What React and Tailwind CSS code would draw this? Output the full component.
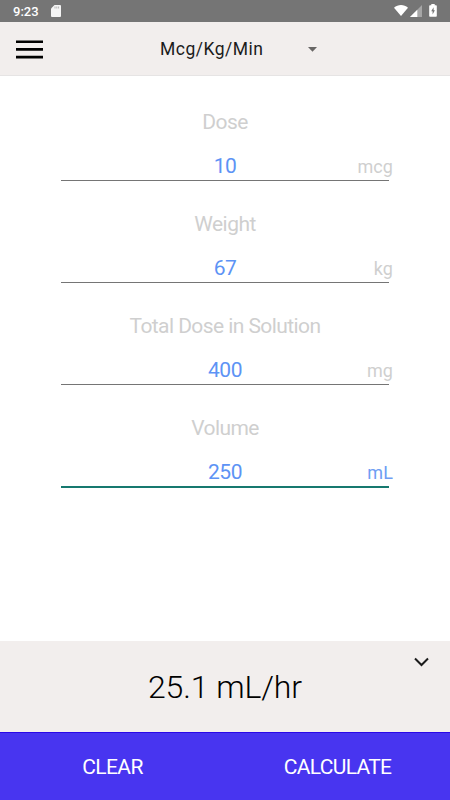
const fields = [
    { label: "Dose", value: "10", unit: "mcg" },
    { label: "Weight", value: "67", unit: "kg" },
    { label: "Total Dose in Solution", value: "400", unit: "mg" },
    { label: "Volume", value: "250", unit: "mL", active: true },
];

function StatusBar(){
    return (
        <div className="flex h-[22px] items-center bg-[#757575] pl-[13px] pr-[13px] text-white">
            <span className="pt-px text-[13px] font-medium leading-[22px]">9:23</span>
            <svg className="ml-3 h-3 w-[10px]" viewBox="0 0 10 12" fill="#f4f4f4">
                <path d="M3.5 0H9a1 1 0 0 1 1 1v10a1 1 0 0 1-1 1H1a1 1 0 0 1-1-1V3.5Z" />
                <path d="M3.5 1.5h1v2h-1zM5.3 1.5h1v2h-1zM7.1 1.5h1v2h-1z" fill="#b5b5b5" />
            </svg>
            <svg className="-mt-px ml-auto h-[11px] w-[14px]" viewBox="0 0 14 11" fill="currentColor">
                <path d="M0 2.7C4-.9 10-.9 14 2.7L7 11Z" />
            </svg>
            <svg className="ml-[2px] h-[12px] w-[12px]" viewBox="0 0 12 12">
                <path d="M12 0v12H0Z" fill="#a6a6a6" />
                <path d="M7.3 4.7V12H0Z" fill="#fff" />
            </svg>
            <svg className="-mt-[2px] ml-[7px] h-[13px] w-[8px]" viewBox="0 0 8 13">
                <path d="M2.3 0h3.4v1.2H7a.8.8 0 0 1 .8.8v10a.8.8 0 0 1-.8.8H1a.8.8 0 0 1-.8-.8V2a.8.8 0 0 1 .8-.8h1.3Z" fill="#fff" />
                <path d="M4.6 3.3 2.2 7.3h1.4v3.2l2.3-4.2H4.6Z" fill="#757575" />
            </svg>
        </div>
    );
}

function Header(){
    return (
        <div className="flex h-[54px] items-center border-b border-[#e6e4e4] bg-[#f2eeed] pl-4">
            <button className="mt-[2px]">
                <svg className="block h-[19px] w-[27px]" viewBox="0 0 27 19" fill="#000">
                    <path d="M0 .4h27v2.7H0zM0 8.1h27v2.7H0zM0 15.8h27v2.7H0z" />
                </svg>
            </button>
            <button className="ml-[117px] flex w-[157px] items-center justify-between text-[#1b1b1b]">
                <span className="text-[17.5px] leading-6 tracking-[0.5px]">Mcg/Kg/Min</span>
                <svg className="mt-px h-[5px] w-[9px]" viewBox="0 0 9 5" fill="#686665">
                    <path d="M0 0h9L4.5 4.7Z" />
                </svg>
            </button>
        </div>
    );
}

function Field({ label, value, unit, active }){
    return (
        <div className="h-[102px]">
            <div className="h-[30px] text-center text-[21px] leading-[32px] tracking-[-0.57px] text-[#cfcfcf]">{label}</div>
            <div className={`mx-[61px] grid grid-cols-3 items-center pt-[16px] ${active ? "h-[46px] border-b-2 border-[#16796f]" : "h-[45px] border-b border-[#757575]"}`}>
                <span className="col-start-2 text-center text-[21px] leading-[28px] tracking-[-0.5px] text-[#5d93f5]">{value}</span>
                <span className={`-mr-1 pt-[2px] text-right text-[18px] leading-[26px] tracking-[0.1px] ${active ? "text-[#6f9df3]" : "text-[#cfcfcf]"}`}>{unit}</span>
            </div>
        </div>
    );
}

export default function App(){
    return (
        <div className="flex h-[800px] w-[450px] flex-col overflow-hidden bg-white font-['Roboto',sans-serif]">
            <StatusBar />
            <Header />
            <div className="flex-1 pt-[30px]">
                {fields.map((field) => (
                    <Field key={field.label} {...field} />
                ))}
            </div>
            <div className="relative flex h-[91px] items-center justify-center bg-[#f2eeed]">
                <span className="text-[32px] font-light leading-10 tracking-[-0.1px] text-black">25.1 mL/hr</span>
                <svg className="absolute right-[21px] top-4 h-[10px] w-[15px]" viewBox="0 0 15 10" fill="none" stroke="#1b1b1b" strokeWidth="2">
                    <path d="m1 1.5 6.5 6.5L14 1.5" />
                </svg>
            </div>
            <div className="grid h-[68px] grid-cols-2 border-t border-[#2a08e8] bg-[#4835f0] pt-[2px] text-[21px] text-white">
                <button className="tracking-[-0.6px]">CLEAR</button>
                <button className="tracking-[-0.66px]">CALCULATE</button>
            </div>
        </div>
    );
}
